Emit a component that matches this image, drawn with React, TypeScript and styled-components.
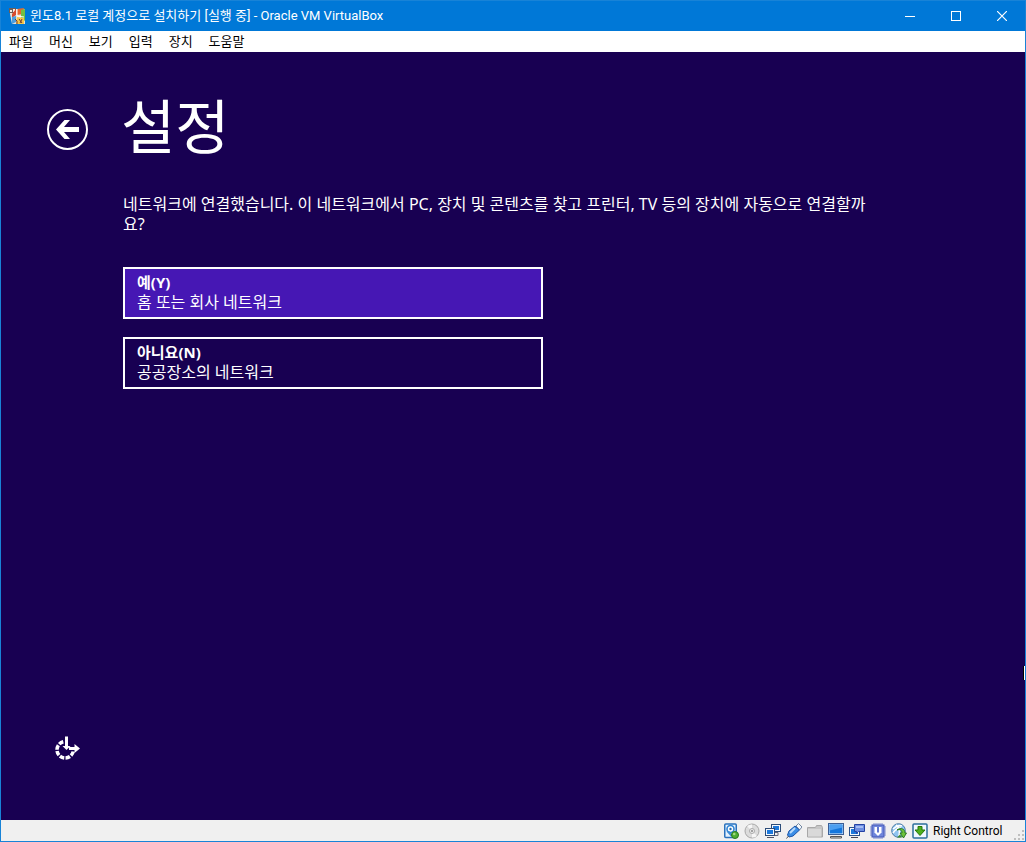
import React from "react";
import styled, { createGlobalStyle } from "styled-components";

const GlobalStyle = createGlobalStyle`
  * { box-sizing: border-box; }
  body { margin: 0; }
  button { font: inherit; color: inherit; cursor: default; }
`;

const Frame = styled.div`
  display: flex;
  flex-direction: column;
  min-height: 100vh;
  border: 1px solid #1883d7;
  background: #180052;
  font-family: "Noto Sans", "Noto Sans CJK KR", sans-serif;
`;

const TitleBar = styled.header`
  display: flex;
  align-items: center;
  height: 30px;
  padding-left: 8px;
  background: #0078d7;
  color: #fff;
`;

const WindowTitle = styled.h1`
  flex: 1;
  margin: 0 0 0 4px;
  font: 400 13px/30px Roboto, "Noto Sans CJK KR", sans-serif;
  white-space: nowrap;
`;

const WindowButton = styled.button`
  display: grid;
  place-items: center;
  width: 46px;
  height: 30px;
  padding: 0;
  border: 0;
  background: none;
`;

const MenuBar = styled.nav`
  display: flex;
  align-items: flex-start;
  height: 21px;
  background: #fff;
`;

const MenuItem = styled.button`
  height: 20px;
  padding: 0 8px;
  border: 0;
  background: none;
  color: #000;
  font-size: 13px;
  line-height: 18px;
`;

const Screen = styled.main`
  position: relative;
  flex: 1;
  display: flex;
  flex-direction: column;
  padding: 40px 45px 57px;
  color: #fff;
`;

const Heading = styled.div`
  display: flex;
  align-items: center;
  gap: 33px;
  height: 74px;
`;

const BackButton = styled.button`
  width: 42px;
  height: 42px;
  padding: 0;
  border: 0;
  background: none;
  svg { display: block; }
`;

const PageTitle = styled.h2`
  margin: 0 0 6px;
  font-size: 59px;
  font-weight: 400;
  line-height: 68px;
`;

const Body = styled.section`
  flex: 1;
  width: 100%;
  max-width: 834px;
  padding: 28px 0 0 77px;
  font-size: 16px;
  line-height: 20px;
`;

const Question = styled.p`
  margin: 0 0 33px;
`;

const Choice = styled.button<{ $selected?: boolean }>`
  display: block;
  width: 100%;
  max-width: 420px;
  height: 52px;
  margin-bottom: 18px;
  padding: 0 12px 2px;
  border: 2px solid #fff;
  background: ${(p) => (p.$selected ? "#4617b4" : "transparent")};
  text-align: left;
`;

const ChoiceName = styled.strong`
  display: block;
  font-size: 15px;
  font-weight: 700;
`;

const ChoiceDetail = styled.span`
  display: block;
`;

const AccessButton = styled.button`
  align-self: flex-start;
  width: 28px;
  height: 28px;
  margin-left: 7px;
  padding: 0;
  border: 0;
  background: none;
  svg { display: block; }
`;

const Cursor = styled.span`
  position: absolute;
  right: 0;
  top: 614px;
  width: 2px;
  height: 14px;
  background: #fff;
  border-left: 1px solid #000;
`;

const StatusBar = styled.footer`
  display: flex;
  align-items: center;
  justify-content: flex-end;
  gap: 5px;
  height: 21px;
  background: #f0f0f0;
  svg { display: block; flex: none; }
`;

const HostKey = styled.span`
  min-width: 73px;
  font: 400 12px/20px Roboto, sans-serif;
  color: #000;
`;

const Grip = styled.div`
  align-self: flex-end;
  padding: 0 1px 1px 3px;
`;

const AppLogo = () => (
  <svg width="17" height="17" viewBox="0 0 17 17">
    <path d="M1 1h15v15H3L1 6z" fill="#e9e2d6" />
    <path d="M0 0h7v5H0z" fill="#6e5d58" />
    <path d="M1 2h2v2H1zM4 1h2v3H4z" fill="#f4ece4" />
    <path d="M8 1l7-1-1 6-6 1z" fill="#e8642e" />
    <path d="M7 1v6l-4 3V6z" fill="#d84a2c" />
    <path d="M12 2l4-1v12l-4-3z" fill="#72c044" />
    <path d="M3 9l4-1v6l-4 2z" fill="#4d9fdf" />
    <path d="M8 9l7 1v6H7z" fill="#f5c64a" />
    <path d="M6 11l2 2v3M10 11l3 4M13 11l-2 4" stroke="#713c34" fill="none" />
    <path d="M8 1v7l7 1" stroke="#fff" fill="none" />
  </svg>
);

const BackIcon = () => (
  <svg width="42" height="42" viewBox="0 0 42 42">
    <circle cx="21.500" cy="21.500" r="19.500" fill="none" stroke="#fff" strokeWidth="2" />
    <path d="M10 21.500l8.500-9.500H24L18 19h15v5H18l6 7h-5.500z" fill="#fff" />
  </svg>
);

const AccessIcon = () => (
  <svg width="28" height="28" viewBox="0 0 28 28">
    <path d="M10.300 6.800A8.200 8.200 0 1 0 20.200 16.500" fill="none" stroke="#fff" strokeWidth="3.500" strokeDasharray="4.700 1.300" />
    <path d="M12 1.500h3V11h2.500l-4 4-4-4H12z" fill="#fff" />
    <path d="M16 12h5.500V9l5.500 4.500-5.500 4.500v-3H16z" fill="#fff" />
  </svg>
);

const DiskIcon = () => (
  <svg width="16" height="16" viewBox="0 0 16 16">
    <rect x="1.750" y="1" width="11.500" height="13.500" rx="1" fill="#e4f1fd" stroke="#2a72bd" strokeWidth="1.500" />
    <circle cx="7.500" cy="6" r="3.500" fill="#fff" stroke="#2f84d4" strokeWidth="1.600" />
    <circle cx="7.500" cy="6" r="1.200" fill="#2468a9" />
    <path d="M3.500 8.500L6 8l4 4-2 1.500z" fill="#3b8ad6" />
    <circle cx="12" cy="12" r="3.500" fill="#4fae35" stroke="#2a7a1c" />
    <circle cx="11.200" cy="11" r="1.300" fill="#a5da80" />
  </svg>
);

const DiscIcon = () => (
  <svg width="16" height="16" viewBox="0 0 16 16">
    <circle cx="8" cy="8" r="7" fill="#dcdcdc" stroke="#a8a8a8" />
    <path d="M8 8L3 3a7 7 0 0 1 5-1.500zM8 8l5 5a7 7 0 0 1-5 1.500z" fill="#f6f6f6" />
    <circle cx="8" cy="8" r="2.500" fill="#eee" stroke="#aaa" />
    <circle cx="8" cy="8" r="1" fill="#888" />
  </svg>
);

const NetworkIcon = () => (
  <svg width="16" height="16" viewBox="0 0 16 16">
    <rect x="6.500" y="1.500" width="9" height="7" fill="#f4f8fc" stroke="#2c4c78" />
    <path d="M8 3h6v4H8z" fill="#1c78dc" />
    <path d="M10 9.500h3v3h-3" fill="none" stroke="#667" />
    <rect x=".5" y="5.500" width="9" height="7" fill="#f4f8fc" stroke="#2c4c78" />
    <path d="M2 7h6v4H2z" fill="#1c78dc" />
    <path d="M2 14.500h7" stroke="#556" />
  </svg>
);

const UsbIcon = () => (
  <svg width="16" height="16" viewBox="0 0 16 16">
    <path d="M10 3l2.500-2.500L16 4l-2.500 3z" fill="#f2f6fb" stroke="#7186a0" />
    <path d="M9 3l4.500 4-6.500 6-4 1-1.500-2L3 8z" fill="#3c8ee6" stroke="#1b55a8" />
    <path d="M9 5L4 10" fill="none" stroke="#b9dbfb" strokeWidth="2" />
    <path d="M2.500 13l-2 2.500" stroke="#555" />
  </svg>
);

const FolderIcon = () => (
  <svg width="16" height="16" viewBox="0 0 16 16">
    <path d="M.5 4.500h8l1-2h5l1 2v9.500H.5z" fill="#c6c6c6" stroke="#a8a8a8" />
    <path d="M1 6h13v7.500H1z" fill="#d9d9d9" />
  </svg>
);

const DisplayIcon = () => (
  <svg width="16" height="16" viewBox="0 0 16 16">
    <rect x=".5" y=".5" width="15" height="11" fill="#e8f3fd" stroke="#3a5e96" />
    <path d="M1.500 1.500h13v9h-13z" fill="#1476dc" />
    <path d="M1.500 1.500h13v3l-13 3z" fill="#4c9ff0" />
    <path d="M2.500 13.500h11v1.500h-11z" fill="#ddd" stroke="#555" />
  </svg>
);

const RecordIcon = () => (
  <svg width="16" height="16" viewBox="0 0 16 16">
    <rect x=".5" y="4.500" width="10" height="8" fill="#f4f8fc" stroke="#27508c" />
    <path d="M2 6h7v5H2z" fill="#1c78dc" />
    <path d="M2 14.500h7" stroke="#445" />
    <path d="M5.500 1.500h10v7h-6l-2 2v-2h-2z" fill="#6c8ee0" stroke="#2442a4" />
    <path d="M7 3h7v2H7z" fill="#a4bcf4" />
  </svg>
);

const CpuIcon = () => (
  <svg width="16" height="16" viewBox="0 0 16 16">
    <path d="M4 0v16M6 0v16M8 0v16M10 0v16M12 0v16M0 4h16M0 6h16M0 8h16M0 10h16M0 12h16" stroke="#5a70cc" strokeWidth=".8" />
    <rect x="2" y="2" width="12" height="12" fill="#6f86dc" stroke="#4459b8" />
    <path d="M4.500 4h7v5.500L8 13 4.500 9.500z" fill="#fff" />
    <path d="M7 4v5l1 1 1-1V4z" fill="#5f76cf" />
  </svg>
);

const MouseIcon = () => (
  <svg width="16" height="16" viewBox="0 0 16 16">
    <circle cx="7.500" cy="7.500" r="6.800" fill="#8fc4f0" stroke="#4a7ba6" />
    <path d="M2 6c3-3 6-4 9-3M2 10c2-3 5-5 8-5M5 2c3 2 4 6 3 11" fill="none" stroke="#fff" strokeWidth="1.600" />
    <path d="M6 7c3-1 5 0 5 3h-2l3.500 5 3-5H14c0-4-4-6-8-3z" fill="#6cc23c" stroke="#24701c" strokeWidth=".9" />
    <path d="M6 14.500l3-3 2 3z" fill="#3d8a2a" />
  </svg>
);

const HostIcon = () => (
  <svg width="16" height="16" viewBox="0 0 16 16">
    <rect x="1" y="1" width="14" height="14" rx="1" fill="#f1f8ff" stroke="#2c6f9c" strokeWidth="1.500" />
    <path d="M6 3.500h4V7h3l-5 5.500L3 7h3z" fill="#4fb01c" stroke="#277707" />
  </svg>
);

const statusIcons = [
  DiskIcon, DiscIcon, NetworkIcon, UsbIcon, FolderIcon,
  DisplayIcon, RecordIcon, CpuIcon, MouseIcon, HostIcon,
];

const menus = ["파일", "머신", "보기", "입력", "장치", "도움말"];

const choices = [
  { name: "예(Y)", detail: "홈 또는 회사 네트워크", selected: true },
  { name: "아니요(N)", detail: "공공장소의 네트워크", selected: false },
];

export default function App() {
  return (
    <>
      <GlobalStyle />
      <Frame>
        <TitleBar>
          <AppLogo />
          <WindowTitle>윈도8.1 로컬 계정으로 설치하기 [실행 중] - Oracle VM VirtualBox</WindowTitle>
          <WindowButton aria-label="최소화">
            <svg width="10" height="10"><path d="M0 5.500h10" stroke="#fff" /></svg>
          </WindowButton>
          <WindowButton aria-label="최대화">
            <svg width="10" height="10"><rect x=".5" y=".5" width="9" height="9" fill="none" stroke="#fff" /></svg>
          </WindowButton>
          <WindowButton aria-label="닫기">
            <svg width="10" height="10"><path d="M0 0l10 10M10 0L0 10" stroke="#fff" strokeWidth="1.200" /></svg>
          </WindowButton>
        </TitleBar>
        <MenuBar>
          {menus.map((m) => <MenuItem key={m}>{m}</MenuItem>)}
        </MenuBar>
        <Screen>
          <Heading>
            <BackButton aria-label="뒤로"><BackIcon /></BackButton>
            <PageTitle>설정</PageTitle>
          </Heading>
          <Body>
            <Question>
              네트워크에 연결했습니다. 이 네트워크에서 PC, 장치 및 콘텐츠를 찾고 프린터, TV 등의 장치에 자동으로 연결할까요?
            </Question>
            {choices.map((c) => (
              <Choice key={c.name} $selected={c.selected}>
                <ChoiceName>{c.name}</ChoiceName>
                <ChoiceDetail>{c.detail}</ChoiceDetail>
              </Choice>
            ))}
          </Body>
          <AccessButton aria-label="접근성"><AccessIcon /></AccessButton>
          <Cursor />
        </Screen>
        <StatusBar>
          {statusIcons.map((Icon, i) => <Icon key={i} />)}
          <HostKey>Right Control</HostKey>
          <Grip>
            <svg width="10" height="10" viewBox="0 0 10 10">
              <path d="M8 0h2v2H8zM4 4h2v2H4zM8 4h2v2H8zM0 8h2v2H0zM4 8h2v2H4zM8 8h2v2H8z" fill="#bfbfbf" />
            </svg>
          </Grip>
        </StatusBar>
      </Frame>
    </>
  );
}
